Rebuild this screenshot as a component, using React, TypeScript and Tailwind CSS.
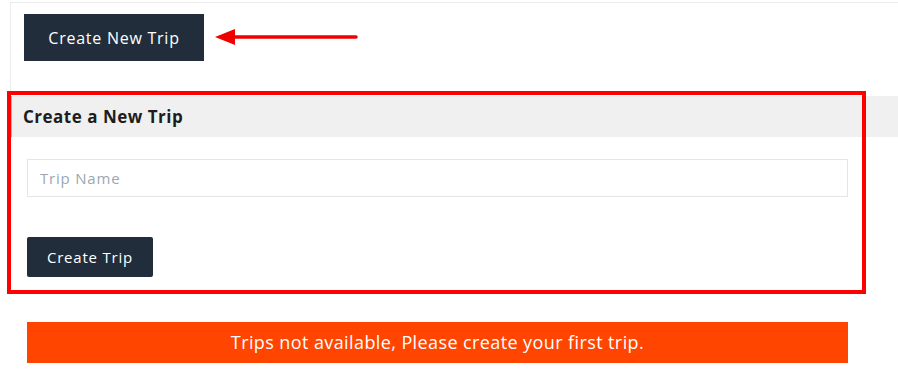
import React from 'react';

const font = { fontFamily: '"Open Sans", "Liberation Sans", sans-serif' };

const App: React.FC = () => {
  return (
    <div className="relative w-full h-[386px] bg-white overflow-hidden" style={font}>
      {/* Top card */}
      <div className="ml-[10px] mt-[2px] h-[89px] border-t border-l border-[#ececec] pl-[13px] pt-[11px]">
        <div className="flex items-center">
          <button className="h-[47px] w-[180px] bg-[#222d3b] text-white text-[16px] tracking-[0.75px]">
            Create New Trip
          </button>
          {/* annotation arrow */}
          <svg width="150" height="20" viewBox="0 0 150 20" className="ml-[10px] mt-[-2px]">
            <polygon points="1,10 21,2 21,18" fill="#ee0000" />
            <line x1="18" y1="10" x2="142" y2="10" stroke="#ee0000" strokeWidth="3.5" strokeLinecap="round" />
          </svg>
        </div>
      </div>

      {/* New trip panel */}
      <div className="ml-[10px] mt-[5px]">
        <div className="h-[41px] bg-[#f0f0f0] border-l-2 border-[#f2b233] pl-[11px] flex items-center">
          <h3 className="text-[17px] font-bold text-[#1d1d1d] tracking-[0.5px]">Create a New Trip</h3>
        </div>
        <div className="pl-[17px] pr-[50px] pt-[22px]">
          <input
            type="text"
            placeholder="Trip Name"
            className="w-full h-[38px] border border-[#e5e5e5] px-[12px] text-[15px] tracking-[0.8px] placeholder:text-[#9aa7b2] outline-none"
          />
          <button className="mt-[40px] h-[40px] w-[126px] bg-[#222d3b] text-white text-[15px] tracking-[0.8px] rounded-[2px]">
            Create Trip
          </button>
        </div>
      </div>

      {/* Empty notice */}
      <div className="ml-[27px] mr-[50px] mt-[45px] h-[41px] bg-[#ff4500] text-white text-[18px] tracking-[0.4px] flex items-center justify-center">
        Trips not available, Please create your first trip.
      </div>

      {/* annotation box */}
      <div className="absolute left-[7px] top-[91px] w-[859px] h-[203px] border-[4px] border-[#ff0000]" />
    </div>
  );
};

export default App;
